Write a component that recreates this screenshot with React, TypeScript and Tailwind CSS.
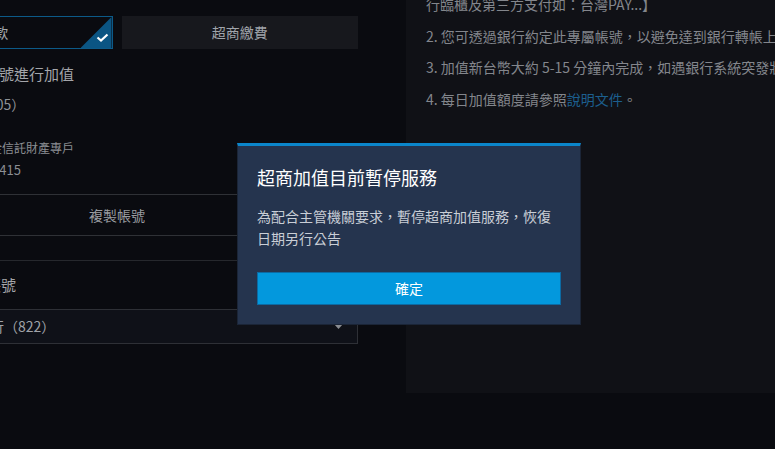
import React from 'react';

const App = () => {
  return (
    <div
      className="relative flex w-[775px] h-[449px] overflow-hidden bg-[#0a0b10]"
      style={{ fontFamily: '"Noto Sans CJK TC", "Noto Sans", sans-serif' }}
    >
      {/* left column, partly scrolled out of view */}
      <div className="shrink-0 w-[482px] ml-[-124px] pt-4 flex flex-col">
        <div className="grid grid-cols-2 gap-[9px] h-[33px]">
          <div className="relative flex items-center justify-center border border-[#0c5a88] text-[14px] text-[#a3a6ab]">
            匯款
            <div className="absolute right-0 bottom-0 w-[31px] h-[31px] bg-[#0b5583] [clip-path:polygon(100%_0,100%_100%,0_100%)]" />
            <svg className="absolute right-[3px] bottom-[6px]" width="13" height="9" viewBox="0 0 13 9" fill="none">
              <polyline points="1.5,4.5 5,7.5 11.5,1.5" stroke="#ffffff" strokeWidth="2.2" />
            </svg>
          </div>
          <div className="flex items-center justify-center bg-[#17181d] text-[14px] text-[#a0a4ab]">超商繳費</div>
        </div>

        <p className="mt-[14px] pl-[3px] text-[15px] leading-[22px] text-[#a4a6aa]">請使用以下專屬帳號進行加值</p>
        <p className="mt-[8px] pl-[14px] text-[14px] leading-[22px] text-[#8f9297]">遠東商業銀行（805）</p>

        <p className="mt-[24px] pl-[6px] text-[12px] leading-[18px] text-[#8b8e93]">戶名：遠東商銀儲值金信託財產專戶</p>
        <p className="mt-[4px] pl-[5px] text-[13px] leading-[18px] text-[#8b8e93]">帳號：00210000000415</p>

        <button className="mt-[15px] h-[42px] border border-[#2f3136] text-[14px] text-[#9a9da2]">複製帳號</button>

        <div className="mt-[24px] h-px bg-[#26282d]" />

        <p className="mt-[13px] pl-[5px] text-[15px] leading-[22px] text-[#a4a6aa]">請選擇約定銀行帳號</p>
        <div className="mt-[13px] h-[35px] flex items-center justify-between pl-[15px] pr-[14px] border border-[#2e3036] bg-[#0f1118] text-[14px] text-[#a0a3a8]">
          <span>中國信託商業銀行（822）</span>
          <svg width="9" height="5" viewBox="0 0 9 5">
            <polygon points="0,0 9,0 4.5,5" fill="#8a8d92" />
          </svg>
        </div>
      </div>

      {/* right notes panel */}
      <div className="flex-1 ml-[48px] h-[393px] bg-[#101116] pl-5 overflow-hidden">
        <ul className="flex flex-col gap-[9.5px] mt-[-29px] text-[14px] leading-[22px] text-[#83868c] whitespace-nowrap">
          <li>
            1. 僅限本人帳戶轉入【不支援他人代轉、ATM 無卡存款、銀
            <br />
            行臨櫃及第三方支付如：台灣PAY...】
          </li>
          <li>2. 您可透過銀行約定此專屬帳號，以避免達到銀行轉帳上限。</li>
          <li>3. 加值新台幣大約 5-15 分鐘內完成，如遇銀行系統突發狀況，可能延遲入帳。</li>
          <li>
            4. 每日加值額度請參照<span className="text-[#1c5f8e]">說明文件</span>。
          </li>
        </ul>
      </div>

      {/* modal */}
      <div className="absolute left-[237px] top-[143px] w-[344px] border border-[#1b2537] border-t-[3px] border-t-[#0b86cb] bg-[#25344e] px-[19px] pt-[18px] pb-[19px]">
        <h2 className="text-[18px] leading-[26px] text-white">超商加值目前暫停服務</h2>
        <p className="mt-[15px] text-[14px] leading-[22px] text-[#c9ced6]">
          為配合主管機關要求，暫停超商加值服務，恢復日期另行公告
        </p>
        <button className="mt-[23px] w-full h-[33px] bg-[#0398dd] border border-[#0c6aa3] text-[14px] text-white">確定</button>
      </div>
    </div>
  );
};

export default App;
